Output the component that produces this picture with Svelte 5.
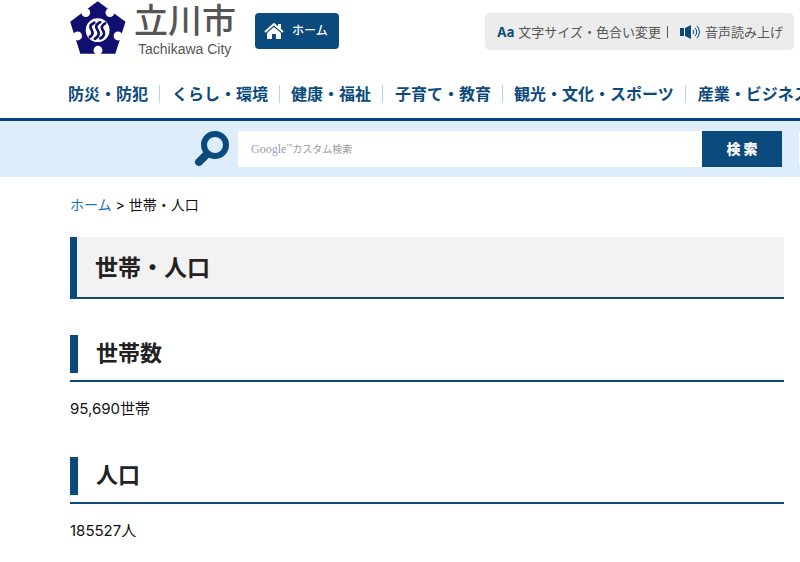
<script lang="ts">
  const categories = [
    "防災・防犯",
    "くらし・環境",
    "健康・福祉",
    "子育て・教育",
    "観光・文化・スポーツ",
    "産業・ビジネス",
  ];

  const sections = [
    { title: "世帯数", value: "95,690世帯" },
    { title: "人口", value: "185527人" },
  ];

  // Notches of the emblem, one in the middle of each side
  const notches = [
    [53, 39],
    [124, 39],
    [148, 108],
    [89, 150],
    [29, 108],
  ];

  let query = $state("");
</script>

<header>
  <div class="top">
    <a class="logo" href="/">
      <svg viewBox="7 5 164 156" aria-hidden="true">
        <path fill="#100f70" d="M88 6 170 66 140 160H37L7 66Z" />
        {#each notches as [cx, cy]}
          <circle {cx} {cy} r="13" fill="#fff" />
        {/each}
        <circle cx="88" cy="91" r="35" fill="#fff" />
        <g fill="none" stroke="#100f70" stroke-width="8" stroke-linecap="round">
          <path d="M78 69C64 76 65 82 70 90S74 106 65 111" />
          <path d="M95 67C80 76 82 83 88 91S92 109 80 116" />
          <path d="M110 71C97 78 99 85 104 92S108 110 96 115" />
        </g>
      </svg>
      <span class="name">
        <span class="kanji">立川市</span>
        <span class="latin">Tachikawa City</span>
      </span>
    </a>

    <a class="home" href="/">
      <svg viewBox="0 0 20 18" aria-hidden="true">
        <path fill="none" stroke="#fff" stroke-width="2" d="M1 10 10 2l9 8" />
        <path fill="#fff" d="M3 11l7-6 7 6v6h-5v-5H8v5H3zM14 2h3v5l-3-2z" />
      </svg>
      ホーム
    </a>

    <div class="tools">
      <a href="/color">
        <b aria-hidden="true">Aa</b>文字サイズ・色合い変更
      </a>
      <span class="bar"></span>
      <a href="/voice">
        <svg viewBox="0 0 21 14" aria-hidden="true">
          <path fill="#0b4a7d" d="M0 3h4v8H0zM5 3l6-3v14l-6-3z" />
          <path fill="none" stroke="#0b4a7d" d="M13 5q1.500 2 0 4M15 3q3.500 4 0 8M17 1q5 6 0 12" />
        </svg>音声読み上げ
      </a>
    </div>
  </div>

  <nav>
    {#each categories as category}
      <a href="/category">{category}</a>
    {/each}
  </nav>
</header>

<div class="search">
  <form onsubmit={(event) => event.preventDefault()}>
    <svg viewBox="0 0 36 36" aria-hidden="true">
      <g fill="none" stroke="#0b4a7d">
        <circle cx="21" cy="14" r="11" stroke-width="6" />
        <path d="M13 23 5 31" stroke-width="8" stroke-linecap="round" />
      </g>
    </svg>
    <div class="field">
      <input id="query" type="text" bind:value={query} />
      {#if !query}
        <label for="query"><span class="brand"><i>G</i>oo<i>g</i>le<sup>™</sup></span>カスタム検索</label>
      {/if}
    </div>
    <button type="submit">検 索</button>
  </form>
  <span class="next"></span>
</div>

<main>
  <div class="breadcrumb"><a href="/">ホーム</a> &gt; 世帯・人口</div>

  <h1>世帯・人口</h1>

  {#each sections as section}
    <section>
      <h2><span>{section.title}</span></h2>
      <p>{section.value}</p>
    </section>
  {/each}
</main>

<style>
  :global(body) {
    margin: 0;
    background: #fff;
    color: #222;
    font-family: Inter, "Noto Sans CJK JP", sans-serif;
    font-size: 14px;
    line-height: 20px;
    overflow-x: hidden;
  }

  a {
    text-decoration: none;
  }

  header {
    border-bottom: 3px solid #04427a;
  }

  .top {
    display: flex;
    align-items: flex-start;
    height: 76px;
    padding: 0 6px 0 70px;
    white-space: nowrap;
  }

  .logo {
    display: flex;
    gap: 8px;
    color: #555;
  }

  .logo svg {
    width: 56px;
    height: 53px;
    margin-top: 1px;
  }

  .name {
    display: grid;
    width: 104px;
  }

  .kanji {
    font-size: 34px;
    font-weight: 500;
    line-height: 42px;
  }

  .latin {
    padding-left: 4px;
    font-family: "Liberation Sans", Arial, sans-serif;
    font-size: 14px;
    line-height: 14px;
  }

  .home {
    display: flex;
    align-items: center;
    gap: 8px;
    box-sizing: border-box;
    width: 84px;
    height: 36px;
    margin: 13px 0 0 17px;
    padding-left: 9px;
    border-radius: 4px;
    background: #0b4a7d;
    color: #fff;
    font-size: 12px;
    font-weight: 500;
  }

  .home svg {
    width: 20px;
    height: 18px;
  }

  .tools {
    display: flex;
    align-items: center;
    gap: 6px;
    height: 37px;
    margin: 13px 0 0 auto;
    padding: 0 11px 0 12px;
    border-radius: 5px;
    background: #ececec;
    font-size: 13px;
    line-height: 16px;
  }

  .tools a {
    display: flex;
    align-items: center;
    gap: 4px;
    color: #555;
  }

  .tools b {
    color: #0b4a7d;
  }

  .tools svg {
    width: 21px;
    height: 14px;
  }

  .bar {
    width: 1px;
    height: 12px;
    margin-right: 6px;
    background: #555;
  }

  nav {
    display: flex;
    height: 42px;
    padding-left: 57px;
    overflow: hidden;
  }

  nav a {
    flex: none;
    height: 18px;
    margin-top: 9px;
    padding: 0 11px;
    border-right: 1px solid #b3d8f5;
    color: #0b4a7d;
    font-size: 16px;
    font-weight: 700;
    line-height: 18px;
  }

  nav a:nth-child(even) {
    padding-left: 12px;
  }

  .search {
    display: flex;
    align-items: center;
    gap: 17px;
    height: 56px;
    padding-left: 194px;
    background: #deedfc;
  }

  form {
    display: flex;
    flex: 1;
    align-items: center;
    min-width: 0;
  }

  form svg {
    width: 36px;
    height: 36px;
    margin-right: 8px;
  }

  .field {
    position: relative;
    flex: 1;
    min-width: 0;
  }

  input {
    display: block;
    box-sizing: border-box;
    width: 100%;
    height: 36px;
    padding: 0 12px;
    border: 0;
    font: inherit;
  }

  label {
    position: absolute;
    inset: 0 auto 0 13px;
    display: flex;
    align-items: center;
    color: #999;
    font-size: 10px;
    white-space: nowrap;
    pointer-events: none;
  }

  .brand {
    font-family: "Liberation Serif", serif;
    font-size: 12px;
  }

  .brand i {
    color: #8eabd0;
    font-style: normal;
  }

  .brand sup {
    font-size: 6px;
    line-height: 0;
  }

  button {
    width: 80px;
    height: 36px;
    padding: 0;
    border: 0;
    background: #0b4a7d;
    color: #fff;
    font: inherit;
    font-weight: 900;
  }

  .next {
    width: 1px;
    height: 32px;
    background: #fff;
  }

  main {
    padding: 18px 16px 0 70px;
  }

  .breadcrumb {
    color: #111;
  }

  .breadcrumb a {
    color: #1a6fc0;
  }

  h1 {
    margin: 22px 0 36px;
    padding: 2px 18px 0;
    border-bottom: 2px solid #0b4a7d;
    border-left: 7px solid #0b4a7d;
    background: #f2f2f2;
    font-size: 23px;
    line-height: 58px;
  }

  h2 {
    margin: 0 0 17px;
    padding-bottom: 7px;
    border-bottom: 2px solid #0b4a7d;
    font-size: 22px;
    line-height: 36px;
  }

  h2 span {
    display: block;
    padding: 0 0 2px 18px;
    border-left: 8px solid #0b4a7d;
  }

  p {
    margin: 0;
    color: #111;
    font-size: 15px;
  }

  section + section {
    margin-top: 38px;
  }
</style>
